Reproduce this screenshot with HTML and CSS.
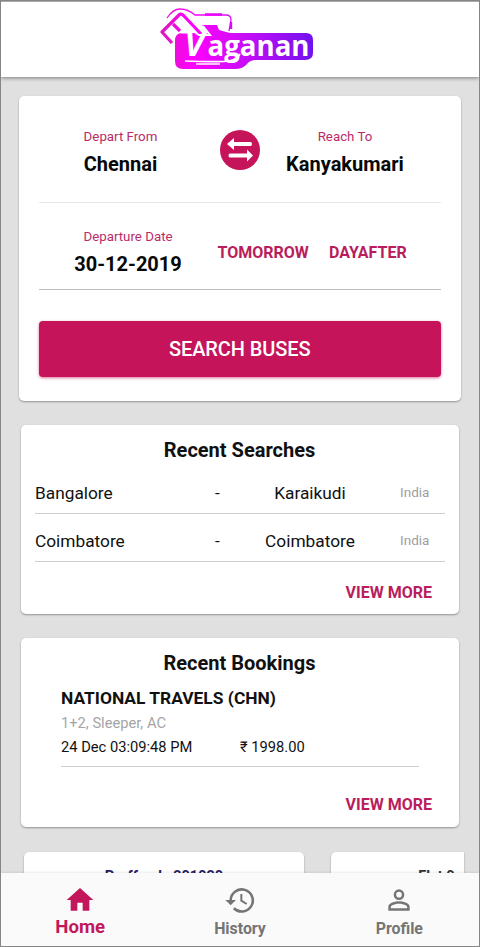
FILE: index.html
```html
<!DOCTYPE html>
<html lang="en">
<head>
<meta charset="utf-8">
<title>Vaganan</title>
<link rel="stylesheet" href="styles.css">
</head>
<body>
<div class="app">
  <header class="header">
    <svg class="logo" width="156" height="66" viewBox="0 0 156 66" role="img" aria-label="Vaganan">
      <defs>
        <linearGradient id="brand" gradientUnits="userSpaceOnUse" x1="2" y1="0" x2="154" y2="0">
          <stop offset="0" stop-color="#dc18bd"/>
          <stop offset=".2" stop-color="#ff00ff"/>
          <stop offset=".5" stop-color="#d00cf8"/>
          <stop offset="1" stop-color="#7012ee"/>
        </linearGradient>
      </defs>
      <path fill="none" stroke="url(#brand)" stroke-width="1.300" d="M7 11Q13 2 20 2Q28 2 35 8H66Q71 8 71 13L69 24"/>
      <path fill="none" stroke="url(#brand)" stroke-width="2.400" d="M45 7.500H62M71 15V22"/>
      <path fill="#fff" d="M2 25L21 7L40 26L13 37Z"/>
      <path fill="url(#brand)" d="M22 26H49L42 18H57L59 23L70 26H146Q153 26 153 33V46Q153 53 145 53H96Q90 53 87 57Q83 62 75 62H23Q15 62 15 54V34Q15 26 22 26Z"/>
      <path fill="none" stroke="url(#brand)" stroke-width="3.200" stroke-linejoin="round" d="M12 36L2 25L19 8Q21 6 24 9L41 27M13 17L20 24"/>
      <path fill="none" stroke="#fff" stroke-width="2" d="M21 25.500H29M35 25.500L39 28H50L43 19"/>
      <path fill="none" stroke="#fff" stroke-width="1.700" d="M25 54Q48 55 64 54.500Q76 54 80 47M36 57H60"/>
      <text class="logo-v" x="24.500" y="48.500">V</text>
      <text class="logo-text" x="47.500" y="48.500" textLength="102" lengthAdjust="spacingAndGlyphs">aganan</text>
    </svg>
  </header>
  <main class="content">
    <section class="card search">
      <div class="route">
        <div class="field"><span class="label">Depart From</span><span class="value">Chennai</span></div>
        <button class="swap" aria-label="Swap">
          <svg width="40" height="40" viewBox="0 0 40 40"><circle cx="20" cy="20" r="20" fill="#c51459"/><path fill="#fff" d="M7 14L14 8V12H30.500Q32 12 32 14T30.500 16H14V20ZM33 25.500L27 31.500V27.500H10Q8.500 27.500 8.500 25.500T10 23.500H27V19.500Z"/></svg>
        </button>
        <div class="field"><span class="label">Reach To</span><span class="value">Kanyakumari</span></div>
      </div>
      <div class="dates">
        <div class="field"><span class="label">Departure Date</span><span class="value">30-12-2019</span></div>
        <button class="link">TOMORROW</button>
        <button class="link">DAYAFTER</button>
      </div>
      <button class="primary">SEARCH BUSES</button>
    </section>
    <section class="card panel">
      <h2>Recent Searches</h2>
      <div class="recents">
        <div class="recent"><span>Bangalore</span><span class="center">-</span><span class="center">Karaikudi</span><span class="country">India</span></div>
        <div class="recent"><span>Coimbatore</span><span class="center">-</span><span class="center">Coimbatore</span><span class="country">India</span></div>
      </div>
      <button class="link more">VIEW MORE</button>
    </section>
    <section class="card panel">
      <h2>Recent Bookings</h2>
      <div class="booking">
        <h3>NATIONAL TRAVELS (CHN)</h3>
        <p class="coach">1+2, Sleeper, AC</p>
        <p class="trip"><span>24 Dec 03:09:48 PM</span><span>₹ 1998.00</span></p>
      </div>
      <button class="link more">VIEW MORE</button>
    </section>
    <div class="offers">
      <div class="card offer">Proffende 201920</div>
      <div class="card offer last">Flat 0</div>
    </div>
  </main>
  <nav class="nav">
    <a class="tab active"><svg width="32" height="32" viewBox="0 0 24 24"><path fill="currentColor" d="M10 20v-6h4v6h5v-8h3L12 3 2 12h3v8z"/></svg><span>Home</span></a>
    <a class="tab"><svg width="32" height="32" viewBox="0 0 24 24"><path fill="none" stroke="currentColor" stroke-width="1.900" d="M5 12A8.300 8.300 0 1 1 7.400 18.200"/><path fill="currentColor" d="M1 12H9L5 16Z"/><path fill="none" stroke="currentColor" stroke-width="1.500" d="M13 7.500V12.500L17 15"/></svg><span>History</span></a>
    <a class="tab"><svg width="32" height="32" viewBox="0 0 24 24"><path fill="currentColor" d="M12 5.900a2.100 2.100 0 1 1 0 4.200 2.100 2.100 0 0 1 0-4.200m0 9c2.970 0 6.100 1.460 6.100 2.100v1.100H5.900V17c0-.64 3.130-2.100 6.100-2.100M12 4a4 4 0 1 0 0 8 4 4 0 0 0 0-8zm0 9c-2.670 0-8 1.340-8 4v3h16v-3c0-2.660-5.330-4-8-4z"/></svg><span>Profile</span></a>
  </nav>
</div>
</body>
</html>
```
FILE: styles.css
```css
* { box-sizing: border-box; }
body { margin: 0; font-family: Roboto, "Noto Sans", sans-serif; color: #111; }
h2, h3, p { margin: 0; }
button { padding: 0; border: 0; background: none; font: inherit; }
svg { display: block; }

.app { display: flex; flex-direction: column; height: 947px; overflow: hidden; background: #e0e0e0; border: 1px solid #858585; }
.header { display: flex; flex: none; justify-content: center; height: 76px; padding: 5px 4px 0 0; background: #fff; border-top: 1px solid #aaa; box-shadow: 0 1px 4px rgba(0, 0, 0, .45); }
.logo-v { font: italic 700 33px "Open Sans", sans-serif; fill: #fff; }
.logo-text { font: 700 29px "Open Sans", sans-serif; fill: #fff; }

.content { flex: 1; min-height: 0; overflow: hidden; padding-top: 19px; }
.card { background: #fff; border-radius: 5px; box-shadow: 0 1px 2px rgba(0, 0, 0, .35); }
.search { height: 305px; margin: 0 18px; padding: 0 20px 0 19.500px; }
.route { display: grid; grid-template-columns: 164px 72px 141px; height: 107px; padding-top: 32px; border-bottom: 1px solid #e8e8e8; }
.field { display: flex; flex-direction: column; align-items: center; }
.label { font-size: 13.300px; line-height: 18px; color: #b92b67; white-space: nowrap; }
.value { margin-top: 5px; font-size: 20px; font-weight: 700; line-height: 26px; color: #080808; }
.swap { width: 40px; height: 40px; margin: 2px 0 0 17px; }
.dates { display: grid; grid-template-columns: 179px 111.500px auto; height: 87px; padding-top: 25px; border-bottom: 1px solid #bdbdbd; }
.link { font-size: 16px; font-weight: 700; line-height: 20px; color: #b91d5c; text-align: left; }
.dates .link { height: 20px; margin-top: 15px; }
.primary { display: block; width: 100%; height: 56px; margin-top: 31px; border-radius: 4px; background: #c51459; color: #fff; font-size: 20px; font-weight: 500; line-height: 54px; letter-spacing: -.1px; box-shadow: 0 1px 3px rgba(197, 20, 89, .6); }

.panel { height: 189px; margin: 24px 20px 0; padding: 12px 14px 0 14px; }
h2 { padding-right: 1px; font-size: 20px; font-weight: 700; line-height: 26px; text-align: center; }
.recents { padding-top: 3px; }
.recent { display: grid; grid-template-columns: 168px 29px 156px 57px; align-items: center; height: 48px; font-size: 17.300px; border-bottom: 1px solid #cfcfcf; }
.recent span { padding-top: 6px; }
.center { text-align: center; }
.recent .country { padding: 4px 0 0 12px; font-size: 13.500px; color: #a0a0a0; }
.more { display: block; margin: 21px 13px 0 auto; }
.booking { height: 91px; margin: 0 26px; padding-top: 10px; border-bottom: 1px solid #cfcfcf; }
.booking + .more { margin-top: 28px; }
h3 { font-size: 17.400px; font-weight: 700; line-height: 24px; }
.coach { margin-top: 2px; font-size: 14.700px; line-height: 22px; color: #a5a5a5; }
.trip { display: grid; grid-template-columns: 179px auto; margin-top: 1px; font-size: 14.700px; line-height: 24px; }

.offers { display: flex; gap: 27px; margin: 25px 15px 0 23px; }
.offer { flex: none; width: 280px; height: 140px; padding-top: 14px; font-size: 14.500px; font-weight: 700; line-height: 22px; text-align: center; color: #25205f; }
.offer.last { width: 133px; padding-left: 78px; border-radius: 5px 0 0 5px; color: #333; }

.nav { position: relative; display: grid; flex: none; grid-template-columns: repeat(3, 1fr); height: 73px; background: #fafafa; box-shadow: 0 -1px 2px rgba(0, 0, 0, .08); }
.tab { display: flex; flex-direction: column; align-items: center; padding-top: 11px; font-size: 15.900px; font-weight: 700; line-height: 25px; color: #757575; }
.tab.active { padding-right: 1px; color: #c2185b; font-size: 18.600px; line-height: 22px; }
```
